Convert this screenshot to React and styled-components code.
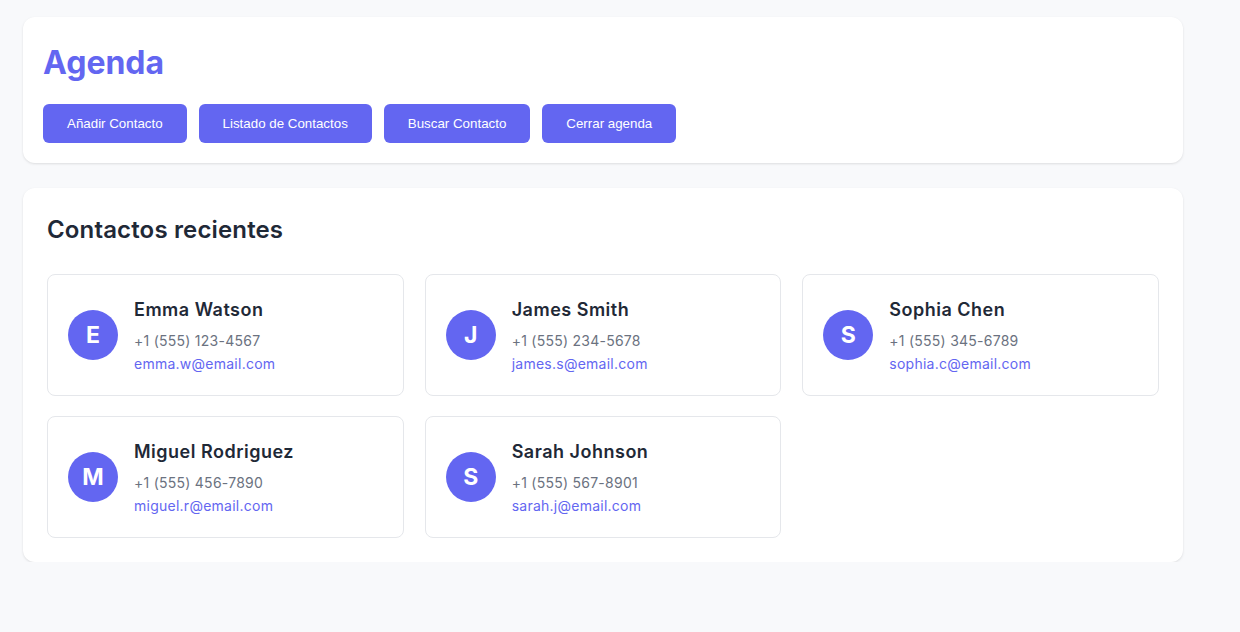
import React from "react";
import styled, { createGlobalStyle } from "styled-components";

const GlobalStyle = createGlobalStyle`
    * {
        box-sizing: border-box;
    }
    body {
        margin: 0;
        background: #f8f9fb;
        font-family: Inter, "Noto Sans", sans-serif;
        color: #1f2937;
    }
`;

const Page = styled.div`
    width: 1160px;
    margin: 17px 0 0 23px;
    display: flex;
    flex-direction: column;
    gap: 25px;
`;

const Panel = styled.section`
    background: #fff;
    border-radius: 12px;
    box-shadow: 0 1px 3px rgba(0, 0, 0, 0.08), 0 1px 2px rgba(0, 0, 0, 0.04);
    padding: ${props => props.$pad};
`;

const Title = styled.h1`
    margin: 2px 0 17px;
    font-size: 32px;
    line-height: 48px;
    font-weight: 700;
    color: #6366f1;
`;

const Toolbar = styled.div`
    display: flex;
    gap: 12px;
`;

const ActionButton = styled.button`
    background: #6366f1;
    color: #fff;
    border: none;
    border-radius: 6px;
    padding: 12px 24px;
    font-family: "Liberation Sans", Arial, sans-serif;
    font-size: 13.333px;
    line-height: 15px;
    cursor: pointer;
`;

const SectionTitle = styled.h2`
    margin: 0 0 26px;
    font-size: 24px;
    line-height: 36px;
    font-weight: 600;
    letter-spacing: 0.15px;
    color: #1f2937;
`;

const Grid = styled.div`
    display: grid;
    grid-template-columns: repeat(3, 1fr);
    gap: 20px 21px;
`;

const Card = styled.div`
    border: 1px solid #e5e7eb;
    border-radius: 8px;
    padding: 20px;
    display: flex;
    align-items: center;
    gap: 16px;
    height: 122px;
`;

const Avatar = styled.div`
    width: 50px;
    height: 50px;
    border-radius: 50%;
    background: #6366f1;
    color: #fff;
    display: flex;
    align-items: center;
    justify-content: center;
    font-size: 23px;
    font-weight: 700;
    flex-shrink: 0;
`;

const Info = styled.div`
    display: flex;
    flex-direction: column;
`;

const Name = styled.div`
    font-size: 18px;
    line-height: 27px;
    font-weight: 600;
    letter-spacing: 0.5px;
    color: #1f2937;
    margin-bottom: 7px;
`;

const Line = styled.div`
    font-size: 14px;
    line-height: 21px;
    letter-spacing: 0.25px;
    color: ${props => (props.$accent ? "#6366f1" : "#6b7280")};
    margin-bottom: ${props => (props.$accent ? "0" : "2px")};
`;

const contacts = [
    { name: "Emma Watson", phone: "+1 (555) 123-4567", email: "emma.w@email.com" },
    { name: "James Smith", phone: "+1 (555) 234-5678", email: "james.s@email.com" },
    { name: "Sophia Chen", phone: "+1 (555) 345-6789", email: "sophia.c@email.com" },
    { name: "Miguel Rodriguez", phone: "+1 (555) 456-7890", email: "miguel.r@email.com" },
    { name: "Sarah Johnson", phone: "+1 (555) 567-8901", email: "sarah.j@email.com" }
];

const actions = ["Añadir Contacto", "Listado de Contactos", "Buscar Contacto", "Cerrar agenda"];

export default function App() {
    return (
        <>
            <GlobalStyle />
            <Page>
                <Panel $pad="20px">
                    <Title>Agenda</Title>
                    <Toolbar>
                        {actions.map(label => (
                            <ActionButton key={label}>{label}</ActionButton>
                        ))}
                    </Toolbar>
                </Panel>
                <Panel $pad="24px">
                    <SectionTitle>Contactos recientes</SectionTitle>
                    <Grid>
                        {contacts.map(c => (
                            <Card key={c.email}>
                                <Avatar>{c.name[0]}</Avatar>
                                <Info>
                                    <Name>{c.name}</Name>
                                    <Line>{c.phone}</Line>
                                    <Line $accent>{c.email}</Line>
                                </Info>
                            </Card>
                        ))}
                    </Grid>
                </Panel>
            </Page>
        </>
    );
}
